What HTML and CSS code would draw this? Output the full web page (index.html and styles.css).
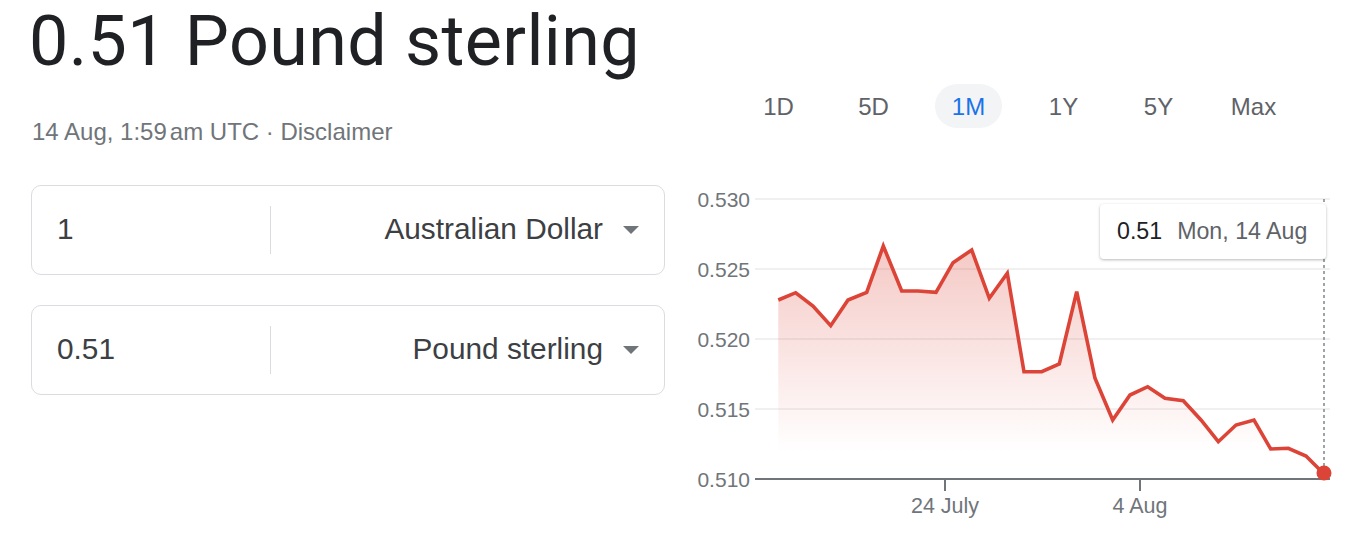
FILE: index.html
```html
<!DOCTYPE html>
<html lang="en">
<head>
<meta charset="utf-8">
<title>0.51 Pound sterling</title>
<link rel="stylesheet" href="styles.css">
</head>
<body>
<div class="page">
  <h1 class="title">0.51 Pound sterling</h1>
  <div class="main">
    <div class="left">
      <div class="stamp">14 Aug, 1:59<span class="thin"></span>am UTC · Disclaimer</div>
      <div class="box">
        <div class="amount">1</div>
        <div class="divider"></div>
        <div class="currency"><span>Australian Dollar</span><span class="caret"></span></div>
      </div>
      <div class="box">
        <div class="amount">0.51</div>
        <div class="divider"></div>
        <div class="currency"><span>Pound sterling</span><span class="caret"></span></div>
      </div>
    </div>
    <div class="right">
      <div class="tabs">
        <div class="tab">1D</div>
        <div class="tab">5D</div>
        <div class="tab active">1M</div>
        <div class="tab">1Y</div>
        <div class="tab">5Y</div>
        <div class="tab">Max</div>
      </div>
      <div class="chart">
        <svg class="chart-svg" width="672" height="362" viewBox="0 0 672 362">
          <defs>
            <linearGradient id="fade" gradientUnits="userSpaceOnUse" x1="0" y1="60" x2="0" y2="272">
              <stop offset="0" stop-color="#db4437" stop-opacity="0.3"/>
              <stop offset="1" stop-color="#db4437" stop-opacity="0"/>
            </linearGradient>
          </defs>
          <g class="grid">
            <line x1="75" y1="19" x2="650" y2="19"/>
            <line x1="75" y1="89" x2="650" y2="89"/>
            <line x1="75" y1="159" x2="650" y2="159"/>
            <line x1="75" y1="229" x2="650" y2="229"/>
          </g>
          <g class="ylabels">
            <text x="70" y="26.5">0.530</text>
            <text x="70" y="96.5">0.525</text>
            <text x="70" y="166.5">0.520</text>
            <text x="70" y="236.5">0.515</text>
            <text x="70" y="306.5">0.510</text>
          </g>
          <polygon class="area" points="98.3,120 115.7,112.7 133,126 150.7,145.7 168,120 186.7,112.3 203.3,66 221.7,111 238,111 256,112.3 273,82.7 291.7,70 309.3,118.3 327.3,93.3 344,191.7 361.7,191.7 379.3,184 396.7,111.7 415,198.3 432.7,240 450,215 467.7,206.7 485,218.3 503.3,220.7 521,240 538.3,261.7 556,245 574,240 590.7,269 608.3,268.3 626,276 643.3,293.3 643.3,299 98.3,299"/>
          <line class="cursor" x1="644" y1="19" x2="644" y2="293"/>
          <line class="axis" x1="75" y1="299" x2="650" y2="299"/>
          <line class="tick" x1="265" y1="299" x2="265" y2="311"/>
          <line class="tick" x1="460" y1="299" x2="460" y2="311"/>
          <polyline class="series" points="98.3,120 115.7,112.7 133,126 150.7,145.7 168,120 186.7,112.3 203.3,66 221.7,111 238,111 256,112.3 273,82.7 291.7,70 309.3,118.3 327.3,93.3 344,191.7 361.7,191.7 379.3,184 396.7,111.7 415,198.3 432.7,240 450,215 467.7,206.7 485,218.3 503.3,220.7 521,240 538.3,261.7 556,245 574,240 590.7,269 608.3,268.3 626,276 643.3,293.3"/>
          <circle class="dot" cx="644" cy="293" r="7.5"/>
          <g class="xlabels">
            <text x="265" y="333">24 July</text>
            <text x="460" y="333">4 Aug</text>
          </g>
        </svg>
        <div class="tooltip"><span class="tip-value">0.51</span><span class="tip-date">Mon, 14 Aug</span></div>
      </div>
    </div>
  </div>
</div>
</body>
</html>
```

FILE: styles.css
```css
html, body {
  margin: 0;
  padding: 0;
  background: #ffffff;
}

body {
  font-family: "Liberation Sans", Arial, sans-serif;
  color: #202124;
  width: 1352px;
  height: 542px;
  overflow: hidden;
}

.title {
  margin: 0;
  padding: 1px 0 0 29px;
  height: 79px;
  font-family: Roboto, "Liberation Sans", sans-serif;
  font-weight: 400;
  font-size: 70px;
  line-height: 80px;
  color: #202124;
  letter-spacing: 0.4px;
  white-space: nowrap;
}

.main {
  display: flex;
}

.left {
  width: 634px;
  margin-left: 31px;
  margin-right: 15px;
}

.stamp {
  margin-top: 37px;
  padding-left: 1px;
  font-size: 24px;
  line-height: 30px;
  color: #70757a;
  white-space: nowrap;
}

.thin {
  display: inline-block;
  width: 3px;
}

.box {
  box-sizing: border-box;
  height: 90px;
  border: 1px solid #dadce0;
  border-radius: 10px;
  display: flex;
  align-items: center;
}

.stamp + .box {
  margin-top: 38px;
}

.box + .box {
  margin-top: 30px;
}

.amount {
  box-sizing: border-box;
  width: 238px;
  padding-left: 25px;
  font-size: 29.8px;
  color: #3c4043;
  margin-top: -2px;
}

.divider {
  width: 1px;
  height: 48px;
  background: #dadce0;
}

.currency {
  flex: 1;
  display: flex;
  justify-content: flex-end;
  align-items: center;
  gap: 20px;
  padding-right: 25px;
  font-size: 29.8px;
  color: #3c4043;
  margin-top: -2px;
}

.caret {
  width: 0;
  height: 0;
  border-left: 8px solid transparent;
  border-right: 8px solid transparent;
  border-top: 8px solid #70757a;
  margin-top: 2px;
}

.right {
  width: 672px;
}

.tabs {
  display: flex;
  gap: 28px;
  padding-left: 65px;
  margin-top: 4px;
}

.tab {
  width: 67px;
  height: 44px;
  border-radius: 22px;
  display: flex;
  align-items: center;
  justify-content: center;
  font-size: 24px;
  color: #5f6368;
  padding-top: 1px;
  box-sizing: border-box;
}

.tab.active {
  background: #f3f4f6;
  color: #1a73e8;
}

.chart {
  position: relative;
  margin-top: 52px;
  height: 362px;
}

.chart-svg {
  display: block;
}

.grid line {
  stroke: #f0f0f0;
  stroke-width: 2;
}

.ylabels text {
  font-family: "Liberation Sans", Arial, sans-serif;
  font-size: 21px;
  fill: #70757a;
  text-anchor: end;
}

.xlabels text {
  font-family: "Liberation Sans", Arial, sans-serif;
  font-size: 21.5px;
  fill: #70757a;
  text-anchor: middle;
}

.area {
  fill: url(#fade);
}

.axis {
  stroke: #70757a;
  stroke-width: 2;
}

.tick {
  stroke: #70757a;
  stroke-width: 2;
}

.cursor {
  stroke: #80868b;
  stroke-width: 1.5;
  stroke-dasharray: 3 3;
}

.series {
  fill: none;
  stroke: #db4437;
  stroke-width: 3.6;
  stroke-linejoin: miter;
}

.dot {
  fill: #db4437;
}

.tooltip {
  position: absolute;
  left: 420px;
  top: 24px;
  box-sizing: border-box;
  width: 226px;
  height: 55px;
  padding-left: 17px;
  background: #ffffff;
  border-radius: 4px;
  box-shadow: 0 1px 3px rgba(0, 0, 0, 0.28);
  display: flex;
  align-items: center;
  gap: 15px;
  font-size: 23.2px;
  white-space: nowrap;
}

.tip-value {
  color: #202124;
}

.tip-date {
  color: #5f6368;
}
```
